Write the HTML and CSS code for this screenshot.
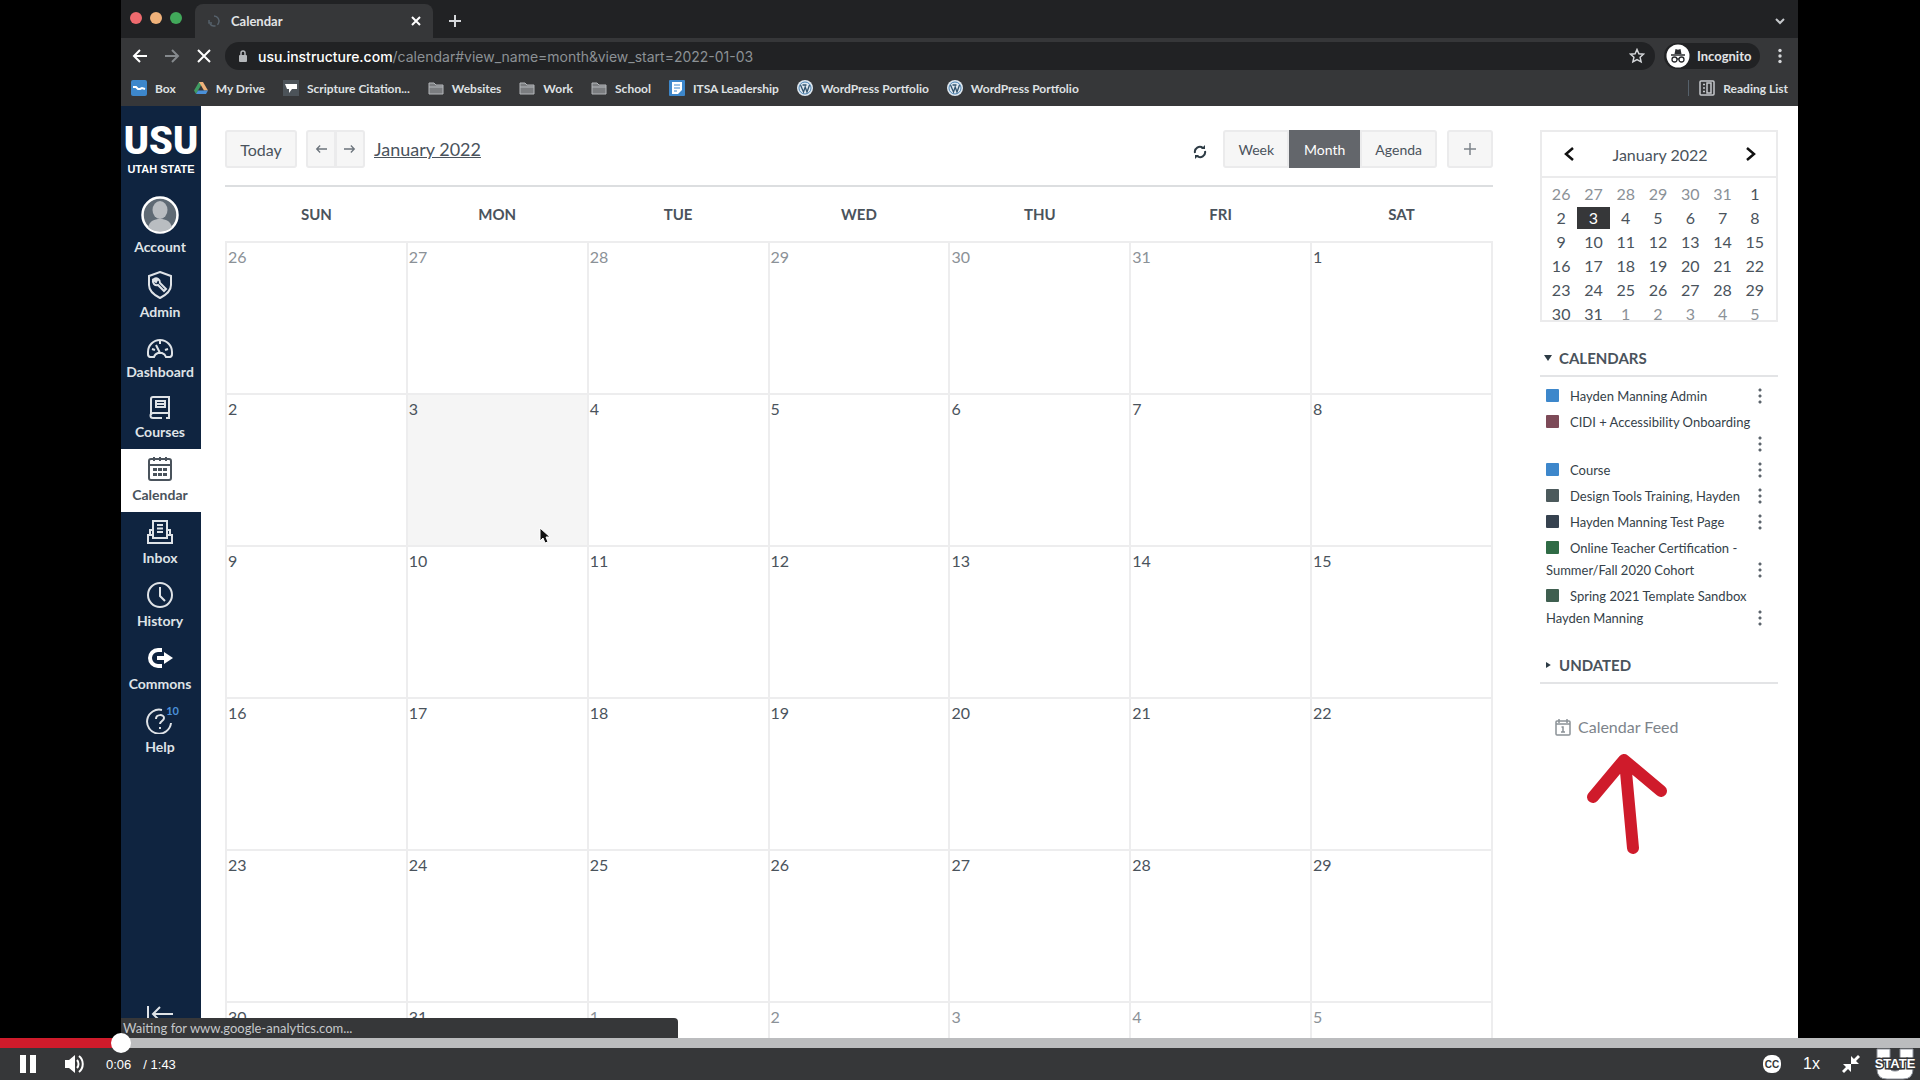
FILE: index.html
```html
<!DOCTYPE html>
<html lang="en">
<head>
  <meta charset="utf-8">
  <title>Calendar</title>
  <link rel="stylesheet" href="styles.css">
</head>
<body>
  <div class="player">
    <div class="stage">
      <div class="browser">
        <div class="tab-strip">
          <span class="light red"></span>
          <span class="light amber"></span>
          <span class="light green"></span>
          <div class="tab">
            <svg width="14" height="14" viewBox="0 0 14 14" fill="none" stroke="#56616b" stroke-width="1.5"><path d="M7 2a5 5 0 1 1-4 8" stroke-dasharray="12 2"/><path d="M2 6v3h3"/></svg>
            <span class="tab-title">Calendar</span>
            <button class="plain" aria-label="Close tab"><svg width="10" height="10" viewBox="0 0 10 10" stroke="#fff" stroke-width="2"><path d="M1 1l8 8M9 1L1 9"/></svg></button>
          </div>
          <button class="plain new-tab" aria-label="New tab"><svg width="12" height="12" viewBox="0 0 12 12" stroke="#d5d7da" stroke-width="2"><path d="M6 0v12M0 6h12"/></svg></button>
          <button class="plain push" aria-label="Search tabs"><svg width="12" height="12" viewBox="0 0 12 12" fill="none" stroke="#c5c8cb" stroke-width="2"><path d="M2 4l4 4 4-4"/></svg></button>
        </div>

        <div class="toolbar">
          <div class="nav-buttons">
            <button class="plain" aria-label="Back"><svg width="16" height="16" viewBox="0 0 16 16" fill="none" stroke="#fff" stroke-width="2"><path d="M15 8H2M8 2L2 8l6 6"/></svg></button>
            <button class="plain" aria-label="Forward"><svg width="16" height="16" viewBox="0 0 16 16" fill="none" stroke="#85898d" stroke-width="2"><path d="M1 8h13M8 2l6 6-6 6"/></svg></button>
            <button class="plain" aria-label="Stop"><svg width="16" height="16" viewBox="0 0 16 16" stroke="#fff" stroke-width="2"><path d="M2 2l12 12M14 2L2 14"/></svg></button>
          </div>
          <div class="omnibox">
            <svg width="10" height="12" viewBox="0 0 10 12"><path d="M3 5V3a2 2 0 0 1 4 0v2" fill="none" stroke="#b4b7ba" stroke-width="1.5"/><rect x="1" y="5" width="8" height="7" rx="1" fill="#b4b7ba"/></svg>
            <span class="url"><b>usu.instructure.com</b>/calendar#view_name=month&amp;view_start=2022-01-03</span>
            <button class="plain push" aria-label="Bookmark"><svg width="16" height="16" viewBox="0 0 16 16" fill="none" stroke="#d5d7da" stroke-width="1.5"><path d="M8 1.5l1.9 4.2 4.6.5-3.4 3.1 1 4.5L8 11.500l-4.100 2.300 1-4.500L1.500 6.200l4.600-.5z"/></svg></button>
          </div>
          <div class="incognito">
            <svg width="24" height="24" viewBox="0 0 24 24"><circle cx="12" cy="12" r="11.500" fill="#fff"/><path d="M8.500 10l1-5 2.500.8L14.500 5l1 5z" fill="#2a2c2f"/><path d="M5 11h14" stroke="#2a2c2f" stroke-width="1.500"/><g fill="none" stroke="#2a2c2f" stroke-width="1.300"><circle cx="8.500" cy="15.500" r="2.500"/><circle cx="15.500" cy="15.500" r="2.500"/><path d="M11 15h2"/></g></svg>
            <span>Incognito</span>
          </div>
          <button class="plain" aria-label="Menu"><svg width="4" height="16" viewBox="0 0 4 16" fill="#d5d7da"><circle cx="2" cy="2.500" r="1.700"/><circle cx="2" cy="8" r="1.700"/><circle cx="2" cy="13.500" r="1.700"/></svg></button>
        </div>

        <div class="bookmarks">
          <a href="#"><svg width="16" height="16" viewBox="0 0 16 16"><rect width="16" height="16" rx="2" fill="#3d87cb"/><path d="M2 7h3l2 2h2l2-1 3 1" fill="none" stroke="#fff" stroke-width="2"/></svg>Box</a>
          <a href="#"><svg width="14" height="14" viewBox="0 0 14 14"><path d="M5 1h4L4 9.500 2 13 0 9.500z" fill="#3f9b62"/><path d="M5 1h4l5 8.500h-4z" fill="#f0b27a"/><path d="M4 9.500h10L12 13H2z" fill="#4a90d9"/></svg>My Drive</a>
          <a href="#"><svg width="16" height="16" viewBox="0 0 16 16"><rect width="16" height="16" fill="#4c5359"/><path d="M2 4h12v5H9l-3 4V9H4z" fill="#fff"/></svg>Scripture Citation...</a>
          <a href="#"><svg class="folder" width="16" height="14" viewBox="0 0 16 14"><path d="M1 2h5l2 2h7v9H1z"/><path d="M1 6h14"/></svg>Websites</a>
          <a href="#"><svg class="folder" width="16" height="14" viewBox="0 0 16 14"><path d="M1 2h5l2 2h7v9H1z"/><path d="M1 6h14"/></svg>Work</a>
          <a href="#"><svg class="folder" width="16" height="14" viewBox="0 0 16 14"><path d="M1 2h5l2 2h7v9H1z"/><path d="M1 6h14"/></svg>School</a>
          <a href="#"><svg width="16" height="16" viewBox="0 0 16 16"><rect width="16" height="16" rx="1" fill="#3d87cb"/><path d="M3 2h10v8l-4 4H3z" fill="#fff"/><path d="M5 5h6M5 8h6M5 11h3" stroke="#3d87cb"/></svg>ITSA Leadership</a>
          <a href="#"><svg width="16" height="16" viewBox="0 0 16 16"><circle cx="8" cy="8" r="8" fill="#dfe8f0"/><circle cx="8" cy="8" r="6" fill="none" stroke="#4a84b5"/><path d="M3.500 5l3 7 1.700-5L10 12l2.500-7M5.500 5h4" fill="none" stroke="#33556f" stroke-width="1.300"/></svg>WordPress Portfolio</a>
          <a href="#"><svg width="16" height="16" viewBox="0 0 16 16"><circle cx="8" cy="8" r="8" fill="#dfe8f0"/><circle cx="8" cy="8" r="6" fill="none" stroke="#4a84b5"/><path d="M3.500 5l3 7 1.700-5L10 12l2.500-7M5.500 5h4" fill="none" stroke="#33556f" stroke-width="1.300"/></svg>WordPress Portfolio</a>
          <a href="#" class="reading"><svg width="16" height="16" viewBox="0 0 16 16" fill="none" stroke="#c5c8cb" stroke-width="1.500"><rect x="1" y="1" width="14" height="14" rx="1"/><path d="M4 4.500h2M4 8h2M4 11.500h2M8 3h4v10H8z"/></svg>Reading List</a>
        </div>

        <div class="page">
          <nav class="side-nav">
            <a href="#" class="logo"><span class="logo-main">USU</span><span class="logo-sub">UTAH STATE</span></a>
            <a href="#" class="item"><svg width="38" height="38" viewBox="0 0 38 38"><circle cx="19" cy="19" r="17.500" fill="#5f6a74" stroke="#fff" stroke-width="2.500"/><ellipse cx="19" cy="14" rx="7.500" ry="9" fill="#b9bdc1"/><path d="M7 31c2-6 6-8 12-8s10 2 12 8c-6 6-18 6-24 0z" fill="#b9bdc1"/></svg>Account</a>
            <a href="#" class="item"><svg width="28" height="28" viewBox="0 0 28 28" fill="none" stroke="#dfe3e7" stroke-width="2"><path d="M14 1l11 4v9c0 6-5 10-11 13C8 24 3 20 3 14V5z"/><path d="M8 8a4 4 0 0 1 6 4l6 6-2 2-6-6a4 4 0 0 1-5-5l3 2 1-2z"/></svg>Admin</a>
            <a href="#" class="item"><svg width="28" height="23" viewBox="0 0 28 23" fill="none" stroke="#dfe3e7" stroke-width="2"><path d="M4 21a3 3 0 0 1-2-3v-2a12 12 0 0 1 24 0v2a3 3 0 0 1-2 3h-4a6 6 0 0 0-4-4h-4a6 6 0 0 0-4 4z"/><path d="M14 17l-4-8M6 13l3 1M14 4v4M22 13l-3 1"/></svg>Dashboard</a>
            <a href="#" class="item"><svg width="28" height="23" viewBox="0 0 28 23" fill="none" stroke="#dfe3e7" stroke-width="2"><path d="M5 19V3a2 2 0 0 1 2-2h16v16H7a2 2 0 0 0 0 5h9M23 17v5h-3"/><path d="M10 5h9v6h-9zM10 8h9"/></svg>Courses</a>
            <a href="#" class="item active"><svg width="26" height="26" viewBox="0 0 26 26" fill="none" stroke="#4a535c" stroke-width="2"><rect x="2" y="3" width="22" height="21" rx="2"/><path d="M2 9h22M7 1v4M13 1v4M19 1v4"/><path d="M6 13.500h4M11 13.500h4M16 13.500h4M6 18.500h4M11 18.500h4M16 18.500h4" stroke-width="3"/></svg>Calendar</a>
            <a href="#" class="item"><svg width="28" height="26" viewBox="0 0 28 26" fill="none" stroke="#dfe3e7" stroke-width="2"><path d="M7 16V2h14v14M7 11H4v5M21 11h3v5M2 16h5v3h14v-3h5v8H2zM11 6h6M11 9.500h6M11 13h6"/></svg>Inbox</a>
            <a href="#" class="item"><svg width="28" height="26" viewBox="0 0 28 26" fill="none" stroke="#dfe3e7" stroke-width="2"><circle cx="14" cy="13" r="12"/><path d="M14 5v9l5 5"/></svg>History</a>
            <a href="#" class="item"><svg width="28" height="26" viewBox="0 0 28 26" fill="none" stroke="#fff" stroke-width="4"><path d="M16 5h-4a8 8 0 0 0 0 16h4M11 13h9"/><path d="M18 7l9 6-9 6z" fill="#fff" stroke="none"/></svg>Commons</a>
            <a href="#" class="item"><svg width="28" height="26" viewBox="0 0 28 26" fill="none" stroke="#dfe3e7" stroke-width="2"><path d="M16 2a12 12 0 1 0 9 13"/><path d="M10 11c0-5 8-5 8-1 0 3-4 3-4 6M14 19v2"/></svg>Help<span class="badge">10</span></a>
            <button class="plain collapse" aria-label="Minimize navigation"><svg width="26" height="18" viewBox="0 0 26 18" fill="none" stroke="#dfe3e7" stroke-width="2"><path d="M1 1v16M26 9H6M13 2L6 9l7 7"/></svg></button>
          </nav>

          <main class="main">
            <div class="cal-header">
              <button class="btn today">Today</button>
              <div class="group arrows">
                <button class="btn" aria-label="Previous month"><svg width="12" height="10" viewBox="0 0 14 10" fill="none" stroke="#6b737b" stroke-width="1.500"><path d="M14 5H2M6 1L2 5l4 4"/></svg></button>
                <button class="btn" aria-label="Next month"><svg width="12" height="10" viewBox="0 0 14 10" fill="none" stroke="#6b737b" stroke-width="1.500"><path d="M0 5h12M8 1l4 4-4 4"/></svg></button>
              </div>
              <a href="#" class="month-title">January 2022</a>
              <button class="plain refresh" aria-label="Refresh"><svg width="14" height="14" viewBox="0 0 14 14" fill="none" stroke="#2d3b45" stroke-width="2"><path d="M2 8a5 5 0 0 1 8-5M12 6a5 5 0 0 1-8 5"/><path d="M8 4h4V0zM6 10H2v4z" fill="#2d3b45" stroke="none"/></svg></button>
              <div class="group views">
                <button class="btn">Week</button>
                <button class="btn selected">Month</button>
                <button class="btn">Agenda</button>
              </div>
              <button class="btn add" aria-label="Create new event"><svg width="12" height="12" viewBox="0 0 12 12" stroke="#7d848b" stroke-width="1.500"><path d="M6 0v12M0 6h12"/></svg></button>
            </div>

            <table class="month">
              <thead>
                <tr><th>SUN</th><th>MON</th><th>TUE</th><th>WED</th><th>THU</th><th>FRI</th><th>SAT</th></tr>
              </thead>
              <tbody>
                <tr><td class="other">26</td><td class="other">27</td><td class="other">28</td><td class="other">29</td><td class="other">30</td><td class="other">31</td><td>1</td></tr>
                <tr><td>2</td><td class="current">3<svg class="cursor" width="12" height="18" viewBox="0 0 12 18"><path d="M1 1v13l3-3 2 5 3-1-2-5h4z" fill="#111" stroke="#fff"/></svg></td><td>4</td><td>5</td><td>6</td><td>7</td><td>8</td></tr>
                <tr><td>9</td><td>10</td><td>11</td><td>12</td><td>13</td><td>14</td><td>15</td></tr>
                <tr><td>16</td><td>17</td><td>18</td><td>19</td><td>20</td><td>21</td><td>22</td></tr>
                <tr><td>23</td><td>24</td><td>25</td><td>26</td><td>27</td><td>28</td><td>29</td></tr>
                <tr><td>30</td><td>31</td><td class="other">1</td><td class="other">2</td><td class="other">3</td><td class="other">4</td><td class="other">5</td></tr>
              </tbody>
            </table>
          </main>

          <aside class="right">
            <div class="mini">
              <div class="mini-header">
                <button class="plain" aria-label="Previous"><svg width="10" height="14" viewBox="0 0 10 14" fill="none" stroke="#111" stroke-width="2.500"><path d="M9 1L2 7l7 6"/></svg></button>
                <span>January 2022</span>
                <button class="plain" aria-label="Next"><svg width="10" height="14" viewBox="0 0 10 14" fill="none" stroke="#111" stroke-width="2.500"><path d="M1 1l7 6-7 6"/></svg></button>
              </div>
              <div class="mini-body">
                <table>
                  <tr><td class="other">26</td><td class="other">27</td><td class="other">28</td><td class="other">29</td><td class="other">30</td><td class="other">31</td><td>1</td></tr>
                  <tr><td>2</td><td class="current"><span>3</span></td><td>4</td><td>5</td><td>6</td><td>7</td><td>8</td></tr>
                  <tr><td>9</td><td>10</td><td>11</td><td>12</td><td>13</td><td>14</td><td>15</td></tr>
                  <tr><td>16</td><td>17</td><td>18</td><td>19</td><td>20</td><td>21</td><td>22</td></tr>
                  <tr><td>23</td><td>24</td><td>25</td><td>26</td><td>27</td><td>28</td><td>29</td></tr>
                  <tr><td>30</td><td>31</td><td class="other">1</td><td class="other">2</td><td class="other">3</td><td class="other">4</td><td class="other">5</td></tr>
                </table>
              </div>
            </div>

            <h2><span class="caret down"></span>CALENDARS</h2>
            <ul class="calendars">
              <li><span class="name"><i class="swatch blue"></i>Hayden Manning Admin</span><button class="plain dots" aria-label="More"></button></li>
              <li class="tall"><span class="name"><i class="swatch maroon"></i>CIDI + Accessibility Onboarding</span><button class="plain dots" aria-label="More"></button></li>
              <li><span class="name"><i class="swatch blue"></i>Course</span><button class="plain dots" aria-label="More"></button></li>
              <li><span class="name"><i class="swatch slate"></i>Design Tools Training, Hayden</span><button class="plain dots" aria-label="More"></button></li>
              <li><span class="name"><i class="swatch navy"></i>Hayden Manning Test Page</span><button class="plain dots" aria-label="More"></button></li>
              <li><span class="name"><i class="swatch green"></i>Online Teacher Certification -<br>Summer/Fall 2020 Cohort</span><button class="plain dots" aria-label="More"></button></li>
              <li><span class="name"><i class="swatch forest"></i>Spring 2021 Template Sandbox<br>Hayden Manning</span><button class="plain dots" aria-label="More"></button></li>
            </ul>

            <h2><span class="caret"></span>UNDATED</h2>
            <div class="feed">
              <a href="#"><svg width="16" height="18" viewBox="0 0 16 18" fill="none" stroke="#8b9197" stroke-width="1.500"><rect x="1" y="3" width="14" height="14" rx="1"/><path d="M1 6h14M4 1v4M12 1v4M6.500 9H8v5M6 14h4"/></svg>Calendar Feed</a>
              <svg class="pointer" width="84" height="104" viewBox="0 0 84 104" fill="none" stroke="#cf1b2b" stroke-width="12" stroke-linecap="round" stroke-linejoin="round"><path d="M8 45L39 8l37 31M40 9l8 87"/></svg>
            </div>
          </aside>
          <div class="status">Waiting for www.google-analytics.com...</div>
        </div>
      </div>
    </div>

    <input type="range" class="seek" min="0" max="103" step="any" value="6" aria-label="Seek">
    <div class="controls">
      <button class="plain" aria-label="Pause"><svg width="16" height="18" viewBox="0 0 16 18" fill="#fff"><path d="M0 0h6v18H0zM10 0h6v18h-6z"/></svg></button>
      <button class="plain volume" aria-label="Mute"><svg width="20" height="18" viewBox="0 0 20 18"><path d="M0 5h4l6-5v18l-6-5H0z" fill="#fff"/><path d="M12 5c2 2 2 6 0 8M14 1c5 4 5 12 0 16" fill="none" stroke="#fff" stroke-width="2"/></svg></button>
      <span class="elapsed">0:06</span>
      <span class="total">/ 1:43</span>
      <div class="control-right">
        <button class="plain cc" aria-label="Captions">CC</button>
        <button class="plain speed">1x</button>
        <button class="plain" aria-label="Exit full screen"><svg width="18" height="18" viewBox="0 0 18 18" fill="#fff"><path d="M9 9V1l3 3 4-4 2 2-4 4 3 3zM9 9v8l-3-3-4 4-2-2 4-4-3-3z"/></svg></button>
        <svg class="state" width="42" height="32" viewBox="0 0 42 32" role="img"><path d="M3 1h13v19q0 3 5 3t5-3V1h13v20q0 10-10 10H13Q3 31 3 21z" fill="#fff" stroke="#8d929b"/><text x="21" y="20" text-anchor="middle">STATE</text></svg>
      </div>
    </div>
  </div>
</body>
</html>
```

FILE: styles.css
```css
* {
  box-sizing: border-box;
}

body {
  margin: 0;
  background: #000;
  font-family: Lato, sans-serif;
  color: #4a535c;
}

a {
  color: inherit;
  text-decoration: none;
}

svg {
  display: block;
  flex: none;
}

button {
  font: inherit;
  color: inherit;
  cursor: pointer;
}

.plain {
  padding: 0;
  border: none;
  background: none;
}

.push {
  margin-left: auto;
}

.player {
  display: flex;
  flex-direction: column;
  height: 100vh;
}

.stage {
  flex: 1;
  min-height: 0;
  padding: 0 122px 0 121px;
  overflow: hidden;
}

.browser {
  display: flex;
  flex-direction: column;
  height: 100%;
  background: #363739;
}

/* browser chrome */
.tab-strip {
  display: flex;
  align-items: center;
  height: 38px;
  padding: 4px 12px 0 9px;
  background: #212224;
}

.light {
  width: 12px;
  height: 12px;
  margin: 0 8px 6px 0;
  border-radius: 50%;
}

.light.red { background: #ee6a6e; }
.light.amber { background: #f0b27a; }
.light.green { background: #41a85a; }

.tab {
  display: flex;
  align-items: center;
  gap: 10px;
  width: 238px;
  height: 34px;
  margin-left: 5px;
  padding: 0 12px;
  border-radius: 8px 8px 0 0;
  background: #363739;
}

.tab-title {
  flex: 1;
  font-size: 13px;
  font-weight: bold;
  color: #e2e4e6;
}

.new-tab {
  margin-left: 16px;
}

.toolbar {
  display: flex;
  align-items: center;
  height: 36px;
  padding: 0 16px 0 11px;
}

.nav-buttons {
  display: flex;
  gap: 16px;
  width: 93px;
}

.omnibox {
  display: flex;
  flex: 1;
  align-items: center;
  gap: 10px;
  height: 28px;
  padding: 0 10px 0 13px;
  margin-right: 9px;
  border-radius: 14px;
  background: #212224;
}

.url {
  font: 14px Inter, sans-serif;
  color: #8c9195;
}

.url b {
  font-weight: 500;
  color: #fff;
}

.incognito {
  display: flex;
  align-items: center;
  gap: 7px;
  width: 96px;
  height: 26px;
  margin-right: 18px;
  padding-left: 2px;
  border-radius: 13px;
  background: #212224;
  font-size: 13px;
  font-weight: bold;
  color: #e2e4e6;
}

.bookmarks {
  display: flex;
  align-items: center;
  gap: 18px;
  height: 32px;
  padding: 0 10px 4px;
  font-size: 12px;
  font-weight: bold;
  color: #dfe1e3;
  white-space: nowrap;
}

.bookmarks a {
  display: flex;
  align-items: center;
  gap: 8px;
}

.folder {
  fill: #7b7d80;
  stroke: #b4b7ba;
}

.bookmarks .reading {
  margin-left: auto;
  padding-left: 10px;
  border-left: 1px solid #56616b;
}

/* page */
.page {
  display: flex;
  position: relative;
  flex: 1;
  min-height: 0;
  overflow: hidden;
  background: #fff;
}

.side-nav {
  display: flex;
  flex: none;
  flex-direction: column;
  width: 80px;
  background: #0f2440;
  color: #dfe3e7;
  font-size: 14px;
  font-weight: bold;
}

.logo {
  display: flex;
  flex-direction: column;
  align-items: center;
  height: 83px;
  padding-top: 14px;
  color: #fff;
}

.logo-main {
  font: 900 38px/42px Roboto, sans-serif;
}

.logo-sub {
  font: bold 11px/14px "Liberation Sans", sans-serif;
}

.item {
  display: flex;
  position: relative;
  flex-direction: column;
  align-items: center;
  gap: 4px;
  padding: 7px 2px 8px 0;
  line-height: 18px;
}

.active {
  background: #fff;
  color: #4a535c;
}

.badge {
  position: absolute;
  top: 4px;
  right: 22px;
  font-size: 11px;
  line-height: 12px;
  color: #4a90d9;
}

.collapse {
  align-self: center;
  margin: auto 2px 15px 0;
}

.main {
  flex: 1;
  padding: 24px 47px 0 24px;
}

.cal-header {
  display: flex;
  align-items: center;
  padding-bottom: 17px;
  border-bottom: 2px solid #dcdee0;
}

.btn {
  display: flex;
  align-items: center;
  justify-content: center;
  height: 38px;
  border: 2px solid #ebebec;
  border-radius: 3px;
  background: #f6f6f6;
  font-size: 16px;
}

.today {
  width: 72px;
  margin-right: 9px;
}

.group {
  display: flex;
}

.group .btn:first-child {
  border-radius: 3px 0 0 3px;
}

.group .btn:last-child {
  border-radius: 0 3px 3px 0;
}

.arrows {
  margin-right: 9px;
}

.arrows .btn {
  width: 30px;
}

.arrows .btn + .btn {
  margin-left: -1px;
}

.month-title {
  font-size: 18px;
  text-decoration: underline;
}

.refresh {
  margin-left: auto;
  padding-top: 6px;
}

.views {
  margin: 0 10px 0 16px;
}

.views .btn {
  padding: 0 13px;
  font-size: 14px;
}

.views .selected {
  border-color: #63666b;
  border-radius: 0;
  background: #63666b;
  color: #fff;
}

.add {
  width: 46px;
}

.month {
  width: 100%;
  table-layout: fixed;
  border-collapse: collapse;
}

.month th {
  height: 55px;
  padding: 0;
  font-size: 15px;
  line-height: 20px;
}

.month td {
  position: relative;
  height: 152px;
  padding: 4px 1px;
  border: 2px solid #ededee;
  font-size: 16px;
  line-height: 20px;
  vertical-align: top;
}

.month .current {
  background: #f5f5f5;
}

.month .other,
.mini .other {
  color: #8b9197;
}

.cursor {
  position: absolute;
  right: 36px;
  bottom: 0;
}

.right {
  flex: none;
  width: 258px;
  padding: 24px 20px 0 0;
}

.mini {
  border: 2px solid #ebebec;
}

.mini-header {
  display: flex;
  align-items: center;
  justify-content: space-between;
  height: 46px;
  padding: 0 20px 0 22px;
  border-bottom: 2px solid #ebebec;
  font-size: 16px;
}

.mini-body {
  height: 142px;
  padding: 4px 5px 0 3px;
  overflow: hidden;
}

.mini table {
  width: 100%;
  table-layout: fixed;
  border-spacing: 0;
}

.mini td {
  height: 24px;
  padding: 0;
  font-size: 16px;
  line-height: 22px;
  text-align: center;
}

.mini .current span {
  display: block;
  background: #363739;
  color: #fff;
}

h2 {
  display: flex;
  align-items: center;
  gap: 7px;
  height: 36px;
  margin: 19px 0 0;
  padding-left: 4px;
  border-bottom: 2px solid #e3e4e6;
  font-size: 15px;
  font-weight: bold;
}

.caret {
  width: 8px;
  height: 6px;
  background: #2d3b45;
  clip-path: polygon(25% 0, 85% 50%, 25% 100%);
}

.caret.down {
  clip-path: polygon(0 0, 100% 0, 50% 100%);
}

.calendars {
  margin: 8px 0 0;
  padding: 0 16px 0 6px;
  list-style: none;
  font-size: 13px;
  line-height: 22px;
  color: #353f49;
  white-space: nowrap;
}

.calendars li {
  display: flex;
  align-items: flex-end;
  justify-content: space-between;
  margin-bottom: 4px;
}

.calendars .tall {
  height: 44px;
  align-items: flex-start;
}

.calendars .tall .dots {
  align-self: flex-end;
}

.swatch {
  display: inline-block;
  width: 13px;
  height: 13px;
  margin-right: 11px;
  border-radius: 1px;
  vertical-align: -1px;
}

.swatch.blue { background: #3d87cb; }
.swatch.maroon { background: #7d4a58; }
.swatch.slate { background: #4c5a5c; }
.swatch.navy { background: #36424f; }
.swatch.green { background: #2f6b45; }
.swatch.forest { background: #3f5f50; }

.dots {
  flex: none;
  width: 4px;
  height: 18px;
  margin-bottom: 2px;
  background: radial-gradient(circle, #5c646c 1px, transparent 2px) 0 0 / 4px 6px;
}

.feed {
  position: relative;
  padding: 32px 0 0 15px;
  font-size: 16px;
  line-height: 22px;
  color: #7d848b;
}

.feed a {
  display: flex;
  align-items: center;
  gap: 7px;
}

.pointer {
  position: absolute;
  top: 68px;
  left: 45px;
}

.status {
  position: absolute;
  bottom: 0;
  left: 0;
  width: 557px;
  height: 20px;
  padding-left: 2px;
  border-radius: 0 4px 0 0;
  background: #363739;
  font-size: 13px;
  line-height: 21px;
  color: #c5c8cb;
}

/* player */
.seek {
  position: relative;
  z-index: 1;
  appearance: none;
  width: 100%;
  height: 10px;
  margin: 0;
  background: linear-gradient(to right, #cf1b2b 6%, #bbbcbe 6%);
}

.seek::-webkit-slider-thumb {
  appearance: none;
  width: 20px;
  height: 20px;
  border-radius: 50%;
  background: #fff;
}

.controls {
  display: flex;
  align-items: center;
  height: 32px;
  padding: 0 4px 0 20px;
  background: #363739;
  color: #fff;
  font: 13px "Liberation Sans", sans-serif;
}

.volume {
  margin: 0 21px 0 29px;
}

.total {
  margin-left: 12px;
}

.control-right {
  display: flex;
  align-items: center;
  margin-left: auto;
}

.cc {
  width: 18px;
  height: 18px;
  border-radius: 8px;
  background: #fff;
  color: #363739;
  font-size: 10px;
  font-weight: bold;
}

.speed {
  margin: 0 22px;
  font-size: 16px;
}

.state {
  margin-left: 14px;
}

.state text {
  fill: #fff;
  stroke: #363739;
  stroke-width: 3px;
  paint-order: stroke;
  font: bold 13px "Liberation Sans", sans-serif;
}
```
